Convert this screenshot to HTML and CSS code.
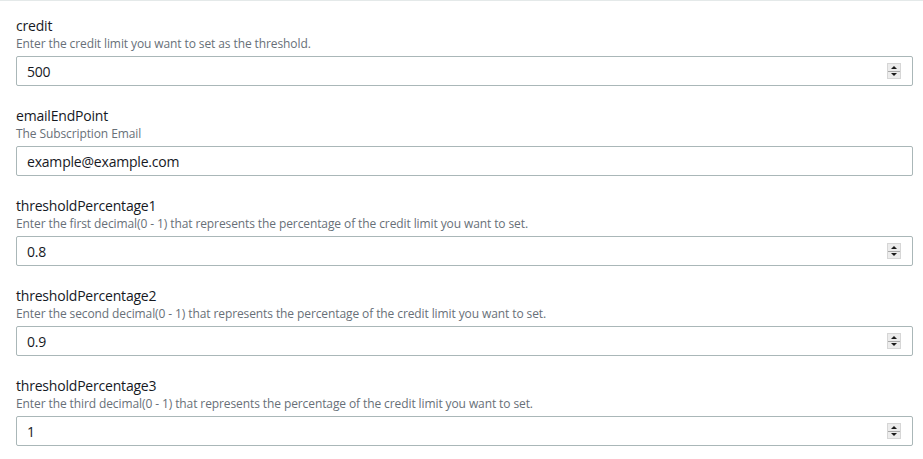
FILE: index.html
```html
<!DOCTYPE html>
<html>
<head>
<meta charset="utf-8">
<link rel="stylesheet" href="styles.css">
</head>
<body>
<div class="form">
  <div class="section">
    <div class="label">credit</div>
    <div class="desc">Enter the credit limit you want to set as the threshold.</div>
    <div class="field">
      <input class="value" type="text" value="500">
      <span class="spinner"><span class="spin up"></span><span class="spin down"></span></span>
    </div>
  </div>
  <div class="section">
    <div class="label">emailEndPoint</div>
    <div class="desc">The Subscription Email</div>
    <div class="field">
      <input class="value" type="text" value="example@example.com">
    </div>
  </div>
  <div class="section">
    <div class="label">thresholdPercentage1</div>
    <div class="desc">Enter the first decimal(0 - 1) that represents the percentage of the credit limit you want to set.</div>
    <div class="field">
      <input class="value" type="text" value="0.8">
      <span class="spinner"><span class="spin up"></span><span class="spin down"></span></span>
    </div>
  </div>
  <div class="section">
    <div class="label">thresholdPercentage2</div>
    <div class="desc">Enter the second decimal(0 - 1) that represents the percentage of the credit limit you want to set.</div>
    <div class="field">
      <input class="value" type="text" value="0.9">
      <span class="spinner"><span class="spin up"></span><span class="spin down"></span></span>
    </div>
  </div>
  <div class="section">
    <div class="label">thresholdPercentage3</div>
    <div class="desc">Enter the third decimal(0 - 1) that represents the percentage of the credit limit you want to set.</div>
    <div class="field">
      <input class="value" type="text" value="1">
      <span class="spinner"><span class="spin up"></span><span class="spin down"></span></span>
    </div>
  </div>
</div>
</body>
</html>
```
FILE: styles.css
```css
html, body {
  margin: 0;
  padding: 0;
  background: #ffffff;
}
body {
  font-family: "Open Sans", "Noto Sans", Arial, sans-serif;
  color: #16191f;
}
.form {
  border-top: 1px solid #e4e9e9;
  padding: 15px 10px 0 16px;
  display: flex;
  flex-direction: column;
  gap: 20px;
}
.section {
  display: flex;
  flex-direction: column;
}
.label {
  font-size: 14px;
  line-height: 20px;
  color: #16191f;
  letter-spacing: -0.2px;
}
.desc {
  font-size: 12px;
  line-height: 16px;
  color: #687078;
  letter-spacing: -0.1px;
}
.field {
  margin-top: 4px;
  height: 30px;
  box-sizing: border-box;
  border: 1px solid #aab7b8;
  border-radius: 2px;
  display: flex;
  align-items: center;
  padding: 0 11px 0 10px;
}
.value {
  flex: 1;
  border: none;
  outline: none;
  padding: 0;
  margin: 0;
  font-family: inherit;
  font-size: 14px;
  letter-spacing: -0.2px;
  color: #16191f;
  background: transparent;
  height: 20px;
}
.spinner {
  width: 14px;
  height: 16px;
  display: flex;
  flex-direction: column;
  box-sizing: border-box;
  border: 1px solid #d6d6d6;
  background: #ececec;
}
.spin {
  flex: 1;
  display: flex;
  align-items: center;
  justify-content: center;
}
.spin.up {
  border-bottom: 1px solid #a8a8a8;
}
.spin.up::before {
  content: "";
  border-left: 3px solid transparent;
  border-right: 3px solid transparent;
  border-bottom: 3px solid #1a1a1a;
}
.spin.down::before {
  content: "";
  border-left: 3px solid transparent;
  border-right: 3px solid transparent;
  border-top: 3px solid #1a1a1a;
}
```
